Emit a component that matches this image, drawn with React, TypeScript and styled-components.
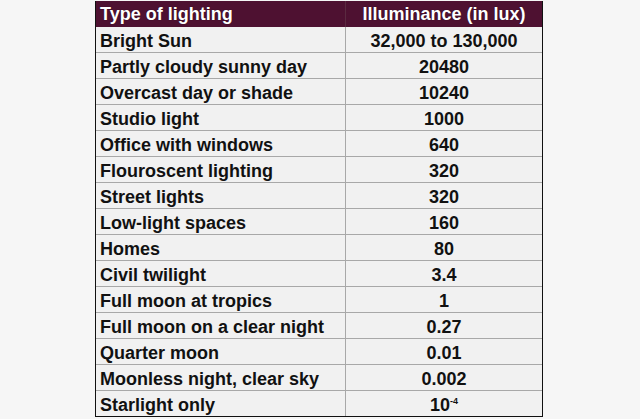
import React from "react";
import styled, { createGlobalStyle } from "styled-components";

const Global = createGlobalStyle`
  html, body { margin: 0; padding: 0; background: #f6f6f6; }
  body { font-family: "Liberation Sans", Arial, sans-serif; }
`;

const Page = styled.div`
  width: 640px;
  height: 419px;
  padding: 1px 0 0 95px;
  box-sizing: border-box;
`;

const Frame = styled.div`
  width: 448px;
  box-sizing: border-box;
  border-left: 1px solid #111;
  border-right: 1px solid #111;
  font-family: "Liberation Sans", Arial, sans-serif;
  font-weight: bold;
  font-size: 18px;
  color: #111;
`;

const Row = styled.div<{ $head?: boolean; $last?: boolean }>`
  display: grid;
  grid-template-columns: 249px 1fr;
  height: 26px;
  box-sizing: border-box;
  overflow: hidden;
  background: ${(p) => (p.$head ? "#4e1131" : "#f1f1f1")};
  color: ${(p) => (p.$head ? "#fff" : "#111")};
  border-bottom: ${(p) =>
    p.$head ? "none" : p.$last ? "1px solid #111" : "1px solid #a8a8a8"};
  text-shadow: ${(p) => (p.$head ? "0 0 1px rgba(0,0,0,0.6)" : "none")};
`;

const Cell = styled.div<{ $center?: boolean; $head?: boolean }>`
  padding-left: ${(p) => (p.$center ? "0" : "4px")};
  padding-top: ${(p) => (p.$head ? "1px" : "2px")};
  line-height: 25px;
  white-space: nowrap;
  text-align: ${(p) => (p.$center ? "center" : "left")};
  border-left: ${(p) =>
    p.$center ? (p.$head ? "1px solid #5a2a40" : "1px solid #a8a8a8") : "none"};
`;

const Sup = styled.sup`
  font-size: 9px;
  line-height: 0;
  vertical-align: 7px;
`;

const rows: [string, React.ReactNode][] = [
  ["Bright Sun", "32,000 to 130,000"],
  ["Partly cloudy sunny day", "20480"],
  ["Overcast day or shade", "10240"],
  ["Studio light", "1000"],
  ["Office with windows", "640"],
  ["Flouroscent lighting", "320"],
  ["Street lights", "320"],
  ["Low-light spaces", "160"],
  ["Homes", "80"],
  ["Civil twilight", "3.4"],
  ["Full moon at tropics", "1"],
  ["Full moon on a clear night", "0.27"],
  ["Quarter moon", "0.01"],
  ["Moonless night, clear sky", "0.002"],
  [
    "Starlight only",
    <>
      10<Sup>-4</Sup>
    </>,
  ],
];

export default function App() {
  return (
    <>
      <Global />
      <Page>
        <Frame role="table">
          <Row $head role="row">
            <Cell $head role="columnheader">Type of lighting</Cell>
            <Cell $head $center role="columnheader">
              Illuminance (in lux)
            </Cell>
          </Row>
          {rows.map(([a, b], i) => (
            <Row key={i} $last={i === rows.length - 1} role="row">
              <Cell role="cell">{a}</Cell>
              <Cell $center role="cell">
                {b}
              </Cell>
            </Row>
          ))}
        </Frame>
      </Page>
    </>
  );
}
